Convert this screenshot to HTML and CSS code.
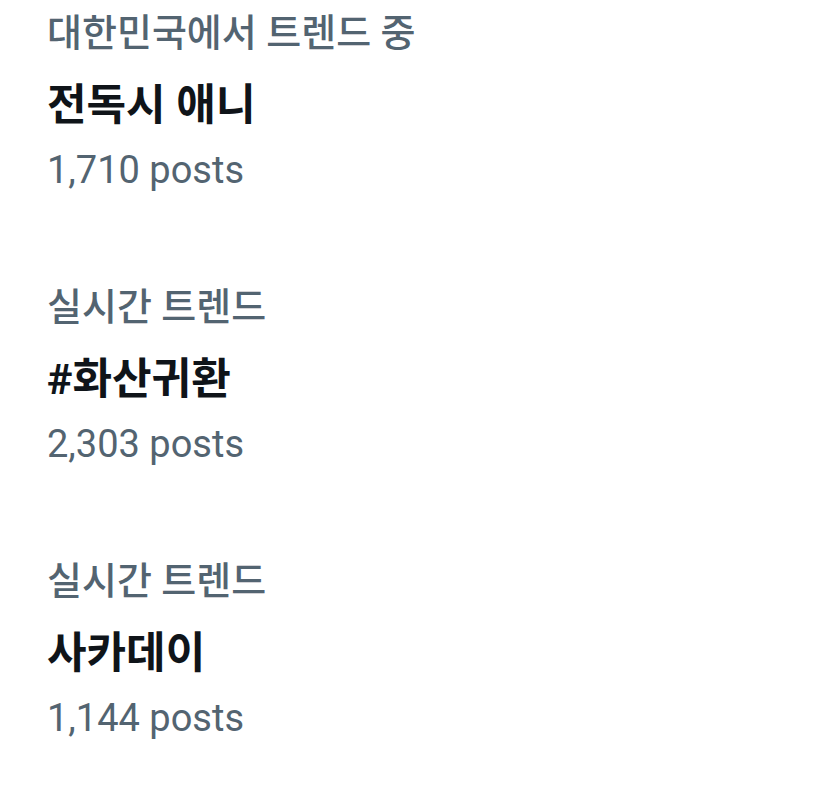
FILE: index.html
```html
<!DOCTYPE html>
<html lang="ko">
<head>
<meta charset="utf-8">
<link rel="stylesheet" href="styles.css">
</head>
<body>
<main class="trends">
  <section class="trend">
    <div class="trend-context">대한민국에서 트렌드 중</div>
    <div class="trend-title">전독시 애니</div>
    <div class="trend-count">1,710 posts</div>
  </section>
  <section class="trend">
    <div class="trend-context">실시간 트렌드</div>
    <div class="trend-title">#화산귀환</div>
    <div class="trend-count">2,303 posts</div>
  </section>
  <section class="trend">
    <div class="trend-context">실시간 트렌드</div>
    <div class="trend-title">사카데이</div>
    <div class="trend-count">1,144 posts</div>
  </section>
</main>
</body>
</html>
```

FILE: styles.css
```css
html, body {
  margin: 0;
  padding: 0;
  background: #ffffff;
}
body {
  font-family: Roboto, "Noto Sans CJK KR", sans-serif;
}
.trends {
  display: flex;
  flex-direction: column;
  gap: 83px;
  padding: 3px 0 0 47px;
}
.trend {
  display: flex;
  flex-direction: column;
}
.trend-context {
  font-size: 38px;
  line-height: 60px;
  font-weight: 500;
  color: #536471;
}
.trend-title {
  font-size: 43px;
  line-height: 84px;
  font-weight: 700;
  color: #0f1419;
}
.trend-count {
  font-size: 38px;
  line-height: 47px;
  color: #536471;
}
```
